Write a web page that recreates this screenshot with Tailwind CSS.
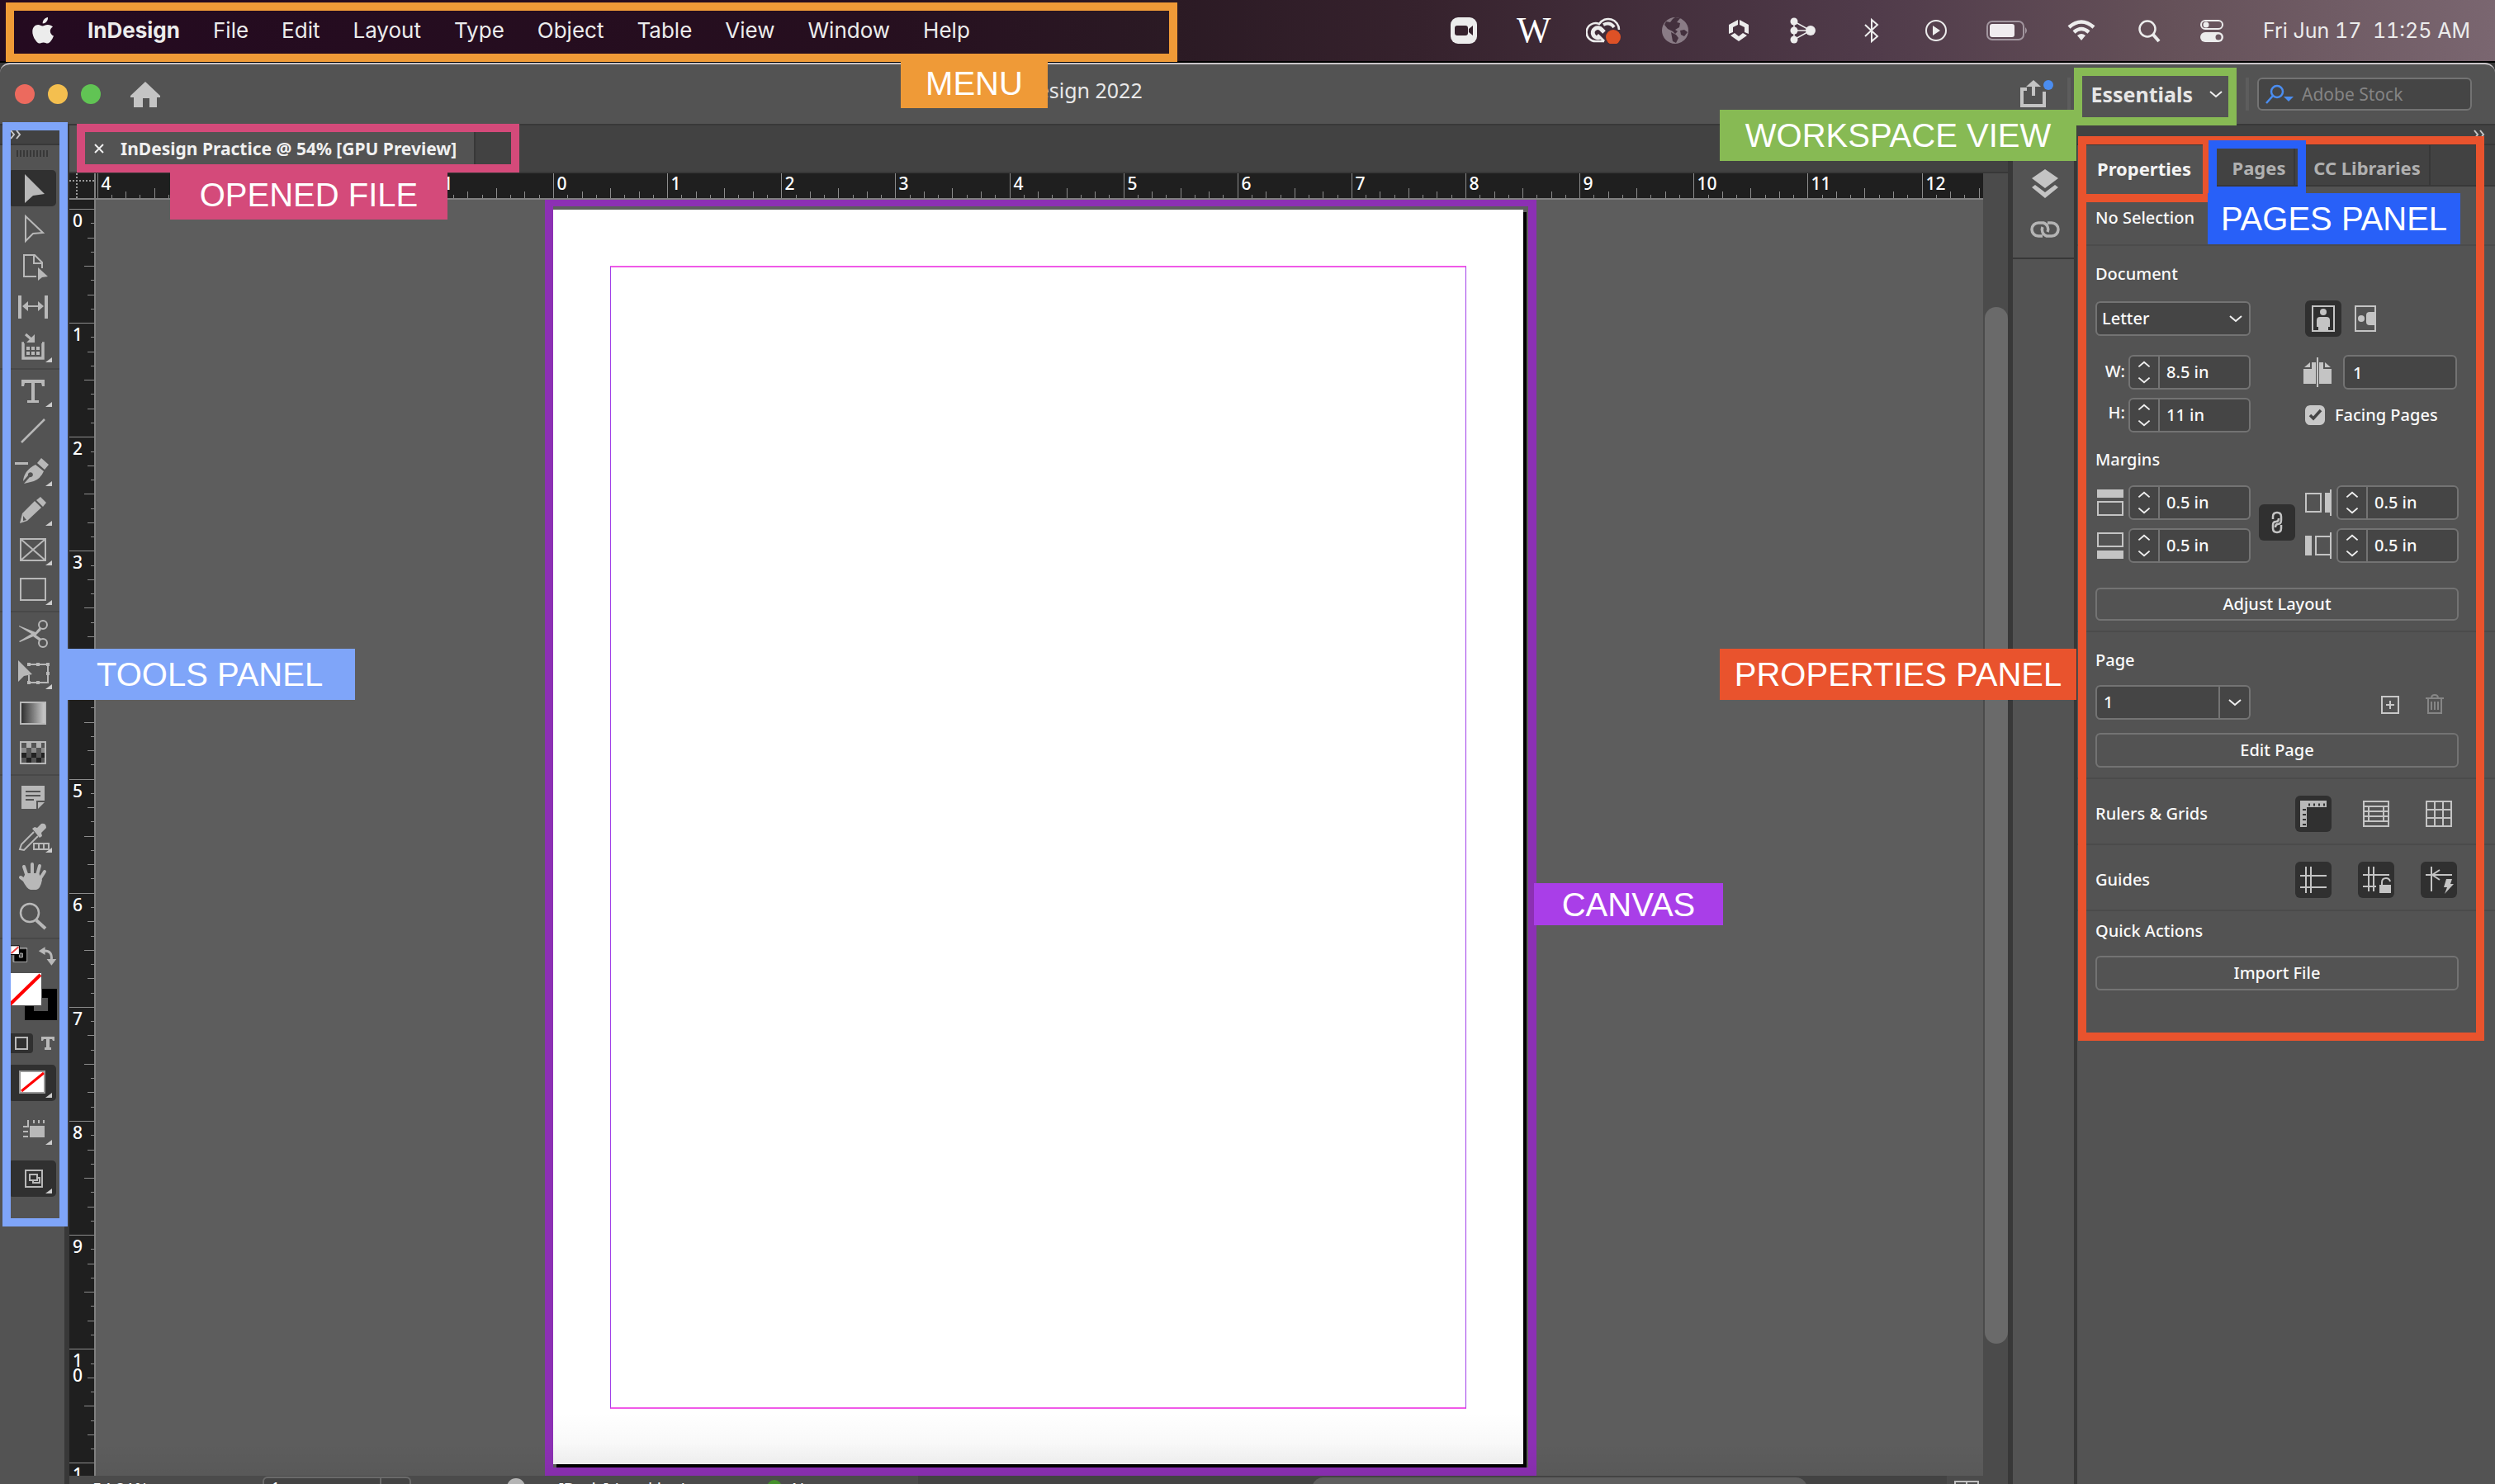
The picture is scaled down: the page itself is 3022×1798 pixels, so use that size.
<!DOCTYPE html>
<html lang="en">
<head>
<meta charset="utf-8">
<title>InDesign workspace overview</title>
<script src="https://cdn.jsdelivr.net/npm/@tailwindcss/browser@4"></script>
</head>
<body class="relative flex h-screen flex-col overflow-hidden bg-[#383838] font-['Noto_Sans',sans-serif] text-[20px] leading-6 text-white">

<svg class="hidden" aria-hidden="true">
  <symbol id="updown" viewBox="0 0 36 38"><path d="M11 12l7-6 7 6M11 26l7 6 7-6" fill="none" stroke="#f0f0f0" stroke-width="2"/></symbol>
  <symbol id="chev" viewBox="0 0 16 10"><path d="M1 2l7 6 7-6" fill="none" stroke="#f0f0f0" stroke-width="2"/></symbol>
  <symbol id="more" viewBox="0 0 14 12"><path d="M1 1l4 5-4 5M8 1l4 5-4 5" fill="none" stroke="#c8c8c8" stroke-width="2"/></symbol>
</svg>

<!-- System menu bar -->
<header class="flex h-[76px] shrink-0 items-center border-b-2 border-black bg-[linear-gradient(90deg,#240a20_0%,#260f1f_35%,#2b1a24_47%,#36222d_57%,#503b4a_75%,#655159_87%,#7a6670_100%)] pr-[30px] pl-[38px] font-['Inter',sans-serif] text-[26px] text-[#ececec]">
  <nav class="flex items-center gap-10" aria-label="Application menu">
    <a href="#" aria-label="Apple" class="block h-8 w-7"><svg class="h-8 w-7" viewBox="0 0 28 32"><path fill="#ececec" d="M20 0c.3 2-.6 4-1.700 5.300C17 6.800 15.200 7.600 13.700 7.500c-.2-2 .6-3.900 1.700-5.100C16.600 1 18.500.1 20 0zM26 11.500c-2 1.200-3.300 3-3.200 5.300.1 2.900 1.800 4.800 4.200 5.800-.7 2.100-2 4.300-3.300 6-1.200 1.600-2.400 2.900-4.200 2.900-1.800 0-2.500-1.100-4.900-1.100s-3.200 1.100-4.900 1.100c-1.800 0-3.100-1.500-4.300-3.200C2.500 24.400 1 20 1.300 16.400c.4-4.700 3.500-7.400 6.800-7.400 2.200 0 3.900 1.400 5.500 1.400 1.500 0 3.500-1.500 6.300-1.400 2.600.1 4.800 1 6.100 2.500z"/></svg></a>
    <a href="#" class="font-bold">InDesign</a>
    <a href="#">File</a><a href="#">Edit</a><a href="#">Layout</a><a href="#">Type</a><a href="#">Object</a><a href="#">Table</a><a href="#">View</a><a href="#">Window</a><a href="#">Help</a>
  </nav>
  <div class="ml-auto flex items-center gap-12">
    <svg class="h-8 w-8" viewBox="0 0 32 32"><rect width="32" height="32" rx="9" fill="#ececec"/><rect x="5" y="10" width="16" height="12" rx="3" fill="#36222d"/><path d="M22 14l5-4v12l-5-4z" fill="#36222d"/></svg>
    <span class="w-9 text-center font-['Liberation_Serif',serif] text-[44px] leading-8 text-white">W</span>
    <svg class="h-8 w-11" viewBox="0 0 44 32"><g fill="none" stroke="#ececec"><path d="M22 29H13a11 11 0 1 1 3-21A13 13 0 0 1 40 15" stroke-width="2.500"/><path d="M22 29L14 21" stroke-width="3"/><path d="M17 24a6 6 0 1 1 2-9l3 3" stroke-width="5"/><path d="M21 9q8-4 13 3" stroke-width="4"/></g><circle cx="33" cy="24" r="9" fill="#dd5126"/></svg>
    <svg class="h-8 w-8" viewBox="0 0 32 32"><circle cx="16" cy="16" r="16" fill="#8a7c86"/><path d="M22 1l-4 5 4 1-1 5-5 3 3 2-3 3-3-3-6-3-4-5 2-4 5 1 3-4 3-2zM22 16l5-1 4 3-4 5-4-2zM11 18l6 3 3 4-3 6-4-2z" fill="#43303d"/></svg>
    <svg class="h-8 w-[26px]" viewBox="0 0 26 32"><path fill="#ececec" d="M12 3L1 9v11l5-2v-6l6-3zM14 3l11 6v11l-5-2v-6l-6-3zM3 22l5-3 5 4 5-4 5 3-10 7z"/></svg>
    <svg class="h-8 w-[34px]" viewBox="0 0 34 32"><g fill="#ececec"><circle cx="6" cy="5" r="4.500"/><circle cx="6" cy="16" r="4.500"/><circle cx="6" cy="27" r="4.500"/><circle cx="26" cy="16" r="6"/></g><path d="M6 5l20 11L6 27zM6 16h20" fill="none" stroke="#ececec" stroke-width="1.500"/></svg>
    <svg class="h-8 w-[35px]" viewBox="0 0 35 32"><path d="M10 9l15 14-7 6V3l7 6-15 14" fill="none" stroke="#ececec" stroke-width="2"/></svg>
    <svg class="h-8 w-[26px]" viewBox="0 0 26 32"><circle cx="13" cy="16" r="12" fill="none" stroke="#ececec" stroke-width="2"/><path d="M9 10l9 6-9 6z" fill="#ececec"/></svg>
    <svg class="h-8 w-[50px]" viewBox="0 0 50 32"><rect x="1" y="5" width="44" height="22" rx="6" fill="none" stroke="#a2969f" stroke-width="2"/><rect x="4" y="8" width="30" height="16" rx="3" fill="#f0ecef"/><path d="M47 12q4 4 0 8z" fill="#a2969f"/></svg>
    <svg class="h-8 w-[34px]" viewBox="0 0 34 32"><g fill="none" stroke="#ececec" stroke-width="4.500"><path d="M2 12q15-13 30 0"/><path d="M8 18q9-8 18 0"/></g><path d="M12 22q5-4 10 0l-5 6z" fill="#ececec"/></svg>
    <svg class="h-8 w-[31px]" viewBox="0 0 31 32"><circle cx="15" cy="14" r="9.500" fill="none" stroke="#ececec" stroke-width="2.500"/><path d="M22 21l7 8" stroke="#ececec" stroke-width="4"/></svg>
    <svg class="h-8 w-7" viewBox="0 0 28 32"><rect x="1" y="4" width="26" height="10" rx="5" fill="none" stroke="#ececec" stroke-width="2"/><circle cx="7" cy="9" r="3.500" fill="#ececec"/><rect y="18" width="28" height="12" rx="6" fill="#ececec"/><circle cx="22" cy="24" r="3.500" fill="#6b5760"/></svg>
    <time class="text-[25px] whitespace-pre tabular-nums">Fri Jun 17  11:25 AM</time>
  </div>
</header>

<!-- Window title bar -->
<div class="flex h-[76px] shrink-0 items-center rounded-t-xl border-t-2 border-b-2 border-t-[#c9c4c8] border-b-[#383838] bg-[#535353] pr-7 pl-[18px]">
  <div class="flex gap-4">
    <button aria-label="Close" class="size-6 rounded-full bg-[#ec6a5e]"></button>
    <button aria-label="Minimize" class="size-6 rounded-full bg-[#f4bf4f]"></button>
    <button aria-label="Zoom" class="size-6 rounded-full bg-[#61c454]"></button>
  </div>
  <button aria-label="Home" class="ml-9"><svg class="h-8 w-9" viewBox="0 0 36 32"><path fill="#c4c4c4" d="M18 1l18 17v2h-4v12h-9V21h-8v11H4V20H0v-2z"/></svg></button>
  <h1 class="ml-[938px] pb-[10px] text-[25px] text-[#e8e8e8]">Adobe InDesign 2022</h1>
  <div class="ml-auto flex items-center">
    <button aria-label="Share"><svg class="h-9 w-[42px]" viewBox="0 0 42 36"><path d="M9 12H3v20h27V15" fill="none" stroke="#c4c4c4" stroke-width="4"/><path d="M17 20V4" stroke="#c4c4c4" stroke-width="4"/><path d="M8 9l9-8 9 8z" fill="#c4c4c4"/><circle cx="35" cy="7" r="6" fill="#4b8df0"/></svg></button>
    <span class="ml-4 h-10 w-1 bg-[#5d5d5d]"></span>
    <button class="ml-6 flex items-center gap-5 text-[25px] font-bold text-[#e6e6e6]">Essentials <svg class="h-[10px] w-4"><use href="#chev"/></svg></button>
    <span class="ml-7 h-10 w-1 bg-[#5d5d5d]"></span>
    <label class="ml-[10px] flex h-10 w-[260px] items-center gap-2 rounded-md border-2 border-[#737373] bg-[#454545] pl-2">
      <svg class="h-6 w-9 shrink-0" viewBox="0 0 36 24"><circle cx="14" cy="9" r="7" fill="none" stroke="#4b8df0" stroke-width="2.500"/><path d="M9 14l-8 9" stroke="#4b8df0" stroke-width="2.500"/><path d="M22 15h12l-6 6z" fill="#4b8df0"/></svg>
      <input aria-label="Search Adobe Stock" placeholder="Adobe Stock" class="w-44 bg-transparent text-[21px] placeholder-[#848484]">
    </label>
  </div>
</div>

<main class="flex min-h-0 flex-1">
  <!-- Tools -->
  <aside class="flex w-[78px] shrink-0 flex-col bg-[#535353]" aria-label="Tools">
    <div class="flex h-6 shrink-0 items-center border-b-2 border-[#383838] bg-[#424242] pl-3"><svg class="h-3 w-[14px]"><use href="#more"/></svg></div>
    <div class="flex h-7 shrink-0 items-center pb-2 pl-5"><svg class="h-2 w-[38px]" viewBox="0 0 38 8"><path d="M0 4h38" stroke="#383838" stroke-width="8" stroke-dasharray="2 2"/></svg></div>
    <div id="tools" class="flex flex-col text-[#b8b8b8]">
      <button aria-label="Selection" class="h-12"><svg class="h-12 w-20" viewBox="0 0 80 48"><rect x="10" y="2" width="58" height="44" rx="5" fill="#303030"/><path fill="currentColor" d="M30 7l24 24-14 2-10 9z"/></svg></button>
      <button aria-label="Direct selection" class="h-12"><svg class="h-12 w-20" viewBox="0 0 80 48"><path fill="none" stroke="currentColor" stroke-width="2" d="M31 10l21 20-12 1-9 9z"/></svg></button>
      <button aria-label="Page" class="h-12"><svg class="h-12 w-20" viewBox="0 0 80 48"><path fill="none" stroke="currentColor" stroke-width="2" d="M44 35H29V9h13l9 9v7M41 9v10h10"/><path fill="currentColor" d="M46 24l12 11-7 1-5 4z"/></svg></button>
      <button aria-label="Gap" class="h-12"><svg class="h-12 w-20" viewBox="0 0 80 48"><path fill="currentColor" d="M22 10h4v28h-4zM54 10h4v28h-4zM27 23l7-6v12zM53 23l-7-6v12z"/><path d="M30 23h20" stroke="currentColor" stroke-width="2"/></svg></button>
      <button aria-label="Content collector" class="h-12"><svg class="h-12 w-20" viewBox="0 0 80 48"><path fill="none" stroke="currentColor" stroke-width="3.500" d="M29 20h-1v18h24V20h-1"/><path fill="currentColor" d="M32 24h4v4h-4zM38 24h4v4h-4zM44 24h4v4h-4zM32 30h4v4h-4zM38 30h4v4h-4zM44 30h4v4h-4zM42 9v10H32z"/><path d="M31 9l8 7" stroke="currentColor" stroke-width="3"/><path fill="#ccc" d="M55 43h8v-6z"/></svg></button>
      <hr class="my-[2px] border-t-2 border-[#484848]">
      <button aria-label="Type" class="h-12"><svg class="h-12 w-20" viewBox="0 0 80 48"><path fill="currentColor" d="M26 10h28v8h-3l-1-4h-8v21h5v3H33v-3h5V14h-8l-1 4h-3z"/><path fill="#ccc" d="M55 43h8v-6z"/></svg></button>
      <button aria-label="Line" class="h-12"><svg class="h-12 w-20" viewBox="0 0 80 48"><path d="M26 38l28-28" stroke="currentColor" stroke-width="2.500"/></svg></button>
      <button aria-label="Pen" class="h-12"><svg class="h-12 w-20" viewBox="0 0 80 48"><path fill="currentColor" d="M18 14h16v3H18zM50 9l9 8-5 6-9-8zM43 17l10 8q-4 9-12 12l-12 3 7-8a3 3 0 1 0-2-2l-6 7q1-13 15-20z"/><path fill="#ccc" d="M55 43h8v-6z"/></svg></button>
      <button aria-label="Pencil" class="h-12"><svg class="h-12 w-20" viewBox="0 0 80 48"><path fill="currentColor" d="M49 8l7 7-4 5-8-8zM42 13l8 8-17 16-9 3 3-12z"/><path fill="#535353" d="M28 31l4 5-4 1z"/><path fill="#ccc" d="M55 43h8v-6z"/></svg></button>
      <button aria-label="Rectangle frame" class="h-12"><svg class="h-12 w-20" viewBox="0 0 80 48"><path fill="none" stroke="currentColor" stroke-width="2" d="M25 11h30v26H25zL55 37M55 11L25 37"/><path fill="#ccc" d="M55 43h8v-6z"/></svg></button>
      <button aria-label="Rectangle" class="h-12"><svg class="h-12 w-20" viewBox="0 0 80 48"><path fill="none" stroke="currentColor" stroke-width="2" d="M25 11h30v26H25z"/><path fill="#ccc" d="M55 43h8v-6z"/></svg></button>
      <hr class="my-[2px] border-t-2 border-[#484848]">
      <button aria-label="Scissors" class="h-12"><svg class="h-12 w-20" viewBox="0 0 80 48"><g fill="none" stroke="currentColor" stroke-width="2"><circle cx="52" cy="13" r="5"/><circle cx="52" cy="35" r="5"/></g><path fill="currentColor" d="M23 14l20 8 5-6 2 3-7 7-19 8-1-1 15-9-15-9zM43 25l7 5-3 2-7-5z"/></svg></button>
      <button aria-label="Free transform" class="h-12"><svg class="h-12 w-20" viewBox="0 0 80 48"><path fill="currentColor" d="M22 8l17 17-10 2-7 7zM33 11h4v4h-4zM44 11h4v4h-4zM56 11h4v4h-4zM56 22h4v4h-4zM33 33h4v4h-4zM44 33h4v4h-4z"/><path fill="none" stroke="currentColor" stroke-width="2" d="M36 13h22v22H35v-9"/><path fill="#ccc" d="M55 43h8v-6z"/></svg></button>
      <button aria-label="Gradient swatch" class="h-12"><svg class="h-12 w-20" viewBox="0 0 80 48"><defs><linearGradient id="gr"><stop offset="0" stop-color="#2a2a2a"/><stop offset="1" stop-color="#d0d0d0"/></linearGradient></defs><path fill="url(#gr)" stroke="currentColor" stroke-width="2" d="M25 11h30v26H25z"/></svg></button>
      <button aria-label="Gradient feather" class="h-12"><svg class="h-12 w-20" viewBox="0 0 80 48"><path fill="#555" stroke="currentColor" stroke-width="2" d="M25 11h30v26H25z"/><path fill="#b0b0b0" d="M32 12h6v6h-6zM44 12h6v6h-6z"/><path fill="#8a8a8a" d="M26 18h6v6h-6zM38 18h6v6h-6zM50 18h4v6h-4z"/><path fill="#222" d="M26 24h6v6h-6zM38 24h6v6h-6zM50 24h4v6h-4zM32 30h6v6h-6zM44 30h6v6h-6z"/></svg></button>
      <hr class="my-[2px] border-t-2 border-[#484848]">
      <button aria-label="Note" class="h-12"><svg class="h-12 w-20" viewBox="0 0 80 48"><path fill="currentColor" d="M26 10h28v18H44v10H26zM46 38v-8h8z"/><path d="M31 17h18M31 22h18M31 27h10" stroke="#535353" stroke-width="2"/></svg></button>
      <button aria-label="Eyedropper" class="h-12"><svg class="h-12 w-20" viewBox="0 0 80 48"><path fill="none" stroke="currentColor" stroke-width="2" d="M41 18L26 33l-2 6 5 1 17-17"/><path fill="currentColor" d="M39 14l3-2 3 1 5-5q6-1 6 5l-6 6 1 4-3 2z"/><path fill="none" stroke="currentColor" stroke-width="2" d="M41 32h18v7H41zM47 32v7M53 32v7"/><path fill="#ccc" d="M55 43h8v-6z"/></svg></button>
      <button aria-label="Hand" class="h-12"><svg class="h-12 w-20" viewBox="0 0 80 48"><path d="M39 22V9M33 24l-4-12M45 22l3-11M49 26l5-8M32 30l-7-5" stroke="currentColor" stroke-width="4" stroke-linecap="round"/><path fill="currentColor" d="M31 20l16 0 4 8q-2 11-7 12h-7q-4 0-10-12z"/></svg></button>
      <button aria-label="Zoom" class="h-12"><svg class="h-12 w-20" viewBox="0 0 80 48"><circle cx="36" cy="20" r="11" fill="none" stroke="currentColor" stroke-width="2.500"/><path d="M44 29l11 10" stroke="currentColor" stroke-width="4"/></svg></button>
      <hr class="my-[2px] border-t-2 border-[#484848]">
      <div class="flex h-[34px]"><svg class="h-[34px] w-20" viewBox="0 0 80 34"><path fill="none" stroke="#b8b8b8" stroke-width="1" d="M19.500 8.500h14v17h-17v-8"/><path fill="#000" d="M18 10h15v15H18z"/><path fill="#535353" stroke="#b8b8b8" d="M24 15h4v5h-4z"/><path fill="#fff" stroke="#000" d="M13 5.500h11v11H13z"/><path d="M14 15l9-8" stroke="#e44" stroke-width="2"/><path fill="none" stroke="currentColor" stroke-width="3" d="M54 12q11-1 10 11"/><path fill="currentColor" d="M56 7v10l-8-5zM58 22h12l-6 8z"/></svg></div>
      <div class="h-[68px]"><svg class="h-[68px] w-20" viewBox="0 0 80 68"><path fill="none" stroke="#000" stroke-width="11" d="M35.500 29.500h28v27h-28z"/><path fill="#fff" stroke="#535353" d="M11 4.500h39.500v40H11z"/><path d="M12 43L49 7" stroke="#f00" stroke-width="4"/></svg></div>
      <div class="h-[44px]"><svg class="h-[44px] w-20" viewBox="0 0 80 44"><rect x="10" y="10" width="30" height="24" rx="4" fill="#303030"/><path fill="none" stroke="currentColor" stroke-width="2" d="M19 15h14v14H19z"/><path fill="currentColor" d="M50 14h16v5h-2l-1-2h-3v10h2v3h-8v-3h2V17h-3l-1 2h-2z"/></svg></div>
      <button aria-label="Apply none" class="h-[52px]"><svg class="h-[52px] w-20" viewBox="0 0 80 52"><rect x="10" y="4" width="58" height="44" rx="5" fill="#303030"/><path fill="#fff" stroke="#999" stroke-width="2" d="M24 12h30v26H24z"/><path d="M26 36l27-22" stroke="#f00" stroke-width="3"/><path fill="#ccc" d="M55 44h8v-6z"/></svg></button>
      <button aria-label="Normal view" class="h-[64px]"><svg class="h-[64px] w-20" viewBox="0 0 80 64"><path fill="currentColor" d="M36 26h18v14H36zM40 19h2v4h-2zM46 19h2v4h-2zM52 19h2v4h-2z"/><path d="M34 19v8h-6M28 33h6M28 39h6" fill="none" stroke="currentColor" stroke-width="2"/><path fill="#ccc" d="M55 49h8v-6z"/></svg></button>
      <button aria-label="Screen mode" class="h-[52px]"><svg class="h-[52px] w-20" viewBox="0 0 80 52"><rect x="10" y="4" width="58" height="44" rx="5" fill="#303030"/><path fill="none" stroke="currentColor" stroke-width="2" d="M31 16h20v20H31zM36 21h9v7h-9zM45 25h3v6h-8v-3"/><path fill="#ccc" d="M55 44h8v-6z"/></svg></button>
    </div>
  </aside>

  <!-- Document -->
  <section class="ml-[6px] flex min-w-0 flex-1 flex-col bg-[#535353]">
    <div class="flex h-[58px] shrink-0 border-b-2 border-[#383838] bg-[#424242]">
      <div class="flex w-[492px] items-center gap-5 border-r-2 border-[#383838] bg-[#535353] pl-[30px]">
        <button aria-label="Close document"><svg class="size-3" viewBox="0 0 12 12"><path d="M1 1l10 10M11 1L1 11" stroke="#eee" stroke-width="2"/></svg></button>
        <span class="text-[21px] font-bold text-[#f0f0f0]">InDesign Practice @ 54% [GPU Preview]</span>
      </div>
    </div>
    <div class="flex min-h-0 flex-1">
      <div class="flex min-w-0 flex-1 flex-col">
        <div class="flex h-8 shrink-0 border-b-2 border-[#808080] bg-[#1f1f1f]">
          <svg class="h-[30px] w-8 shrink-0" viewBox="0 0 32 30"><path d="M0 9h30M9 0v30" stroke="#999" stroke-width="2" stroke-dasharray="2 2"/><path d="M31 0v30" stroke="#808080" stroke-width="2"/></svg>
          <svg id="hruler" class="h-[30px] min-w-0 flex-1"></svg>
        </div>
        <div class="flex min-h-0 flex-1">
          <svg id="vruler" class="w-8 shrink-0 border-r-2 border-[#808080] bg-[#1f1f1f]"></svg>
          <!-- Pasteboard: origin at the corner of the two rulers -->
          <div class="relative min-w-0 flex-1 overflow-hidden bg-[#5d5d5d]">
            <div class="absolute top-[-2px] left-[544px] h-[1548px] w-[1201px] border-[10px] border-[#8c30b4]"></div>
            <div class="absolute top-[15px] left-[558px] h-[1521px] w-[1175px] bg-black"></div>
            <div class="absolute top-3 left-[554px] h-[1520px] w-[1175px] bg-[linear-gradient(#fff_96%,#f4f4f4)]">
              <div class="absolute top-[68px] left-[69px] h-[1385px] w-[1037px] border-x border-y-2 border-x-[#a040e8] border-y-[#f05ae8]"></div>
            </div>
            <div class="absolute inset-x-0 bottom-0 h-10 bg-[linear-gradient(transparent,#0000000c)]"></div>
          </div>
        </div>
      </div>
      <div class="flex w-[30px] shrink-0 flex-col bg-[#4b4b4b] pt-[162px] pl-[2px]"><div class="h-[1256px] rounded-full bg-[#6a6a6a]"></div></div>
    </div>
    <!-- Status bar, running on below the window edge -->
    <div class="h-[10px] shrink-0 overflow-hidden bg-[#4b4b4b]">
      <div class="flex h-10 items-start text-[20px]">
        <span class="w-[234px] pt-1 pl-7">54.21%</span>
        <span class="mt-[1px] flex h-9 w-[180px] rounded-md border-2 border-[#6a6a6a] bg-[#434343] pl-2"><span class="w-[134px] border-r-2 border-[#6a6a6a]">1</span></span>
        <span class="mt-[3px] ml-[116px] size-[22px] rounded-full bg-[#b4b4b4]"></span>
        <span class="w-[293px] pt-1 pl-10">[Basic] (working)</span>
        <span class="mt-[5px] size-[18px] shrink-0 rounded-full bg-[#45902c]"></span>
        <span class="w-[165px] pt-1 pl-3">No errors</span>
        <div class="h-10 flex-1 bg-[#434343] pt-[2px] pl-[477px]"><div class="h-7 w-[600px] rounded-full bg-[#5f5f5f]"></div></div>
        <svg class="h-10 w-[74px] shrink-0" viewBox="0 0 74 40"><path d="M10 30V7h28v23M24 7v23" fill="none" stroke="#c0c0c0" stroke-width="2"/></svg>
      </div>
    </div>
  </section>

  <!-- Collapsed panel dock -->
  <aside class="ml-[6px] flex w-[74px] shrink-0 flex-col bg-[#535353]" aria-label="Collapsed panels">
    <div class="h-[43px] shrink-0 bg-[#424242]"></div>
    <div class="flex flex-col items-center gap-[18px] border-b-2 border-[#383838] pt-[7px] pb-4 pl-1">
      <button aria-label="Layers"><svg class="h-[38px] w-[34px]" viewBox="0 0 34 38"><path fill="#c4c4c4" d="M17 3L33 14 17 26 1 14zM1 25l4-3 12 9 12-9 4 3-16 13z"/></svg></button>
      <button aria-label="Links"><svg class="h-[38px] w-[38px]" viewBox="0 0 38 38"><path d="M16 28h-5a8 8 0 0 1 0-16h6a8 8 0 0 1 5 11M22 12h5a8 8 0 0 1 0 16h-6a8 8 0 0 1-5-11" fill="none" stroke="#b4b4b4" stroke-width="3.500"/></svg></button>
    </div>
  </aside>

  <!-- Properties -->
  <aside class="ml-1 w-[506px] shrink-0 bg-[#535353] font-medium text-[#fafafa]" aria-label="Properties">
    <div class="flex h-6 items-center justify-end border-b-2 border-[#383838] bg-[#424242] pr-3"><svg class="h-3 w-[14px]"><use href="#more"/></svg></div>
    <div class="flex h-[50px] bg-[#424242] text-[22px] font-bold text-[#b0b0b0]" role="tablist">
      <button role="tab" aria-selected="true" class="w-[158px] bg-[#535353] pt-[6px] pl-1 text-[#f4f4f4]">Properties</button>
      <button role="tab" class="w-[106px] border-r-2 border-b-2 border-[#383838] pt-[6px] pl-5">Pages</button>
      <button role="tab" class="w-[164px] border-r-2 border-b-2 border-[#383838] pt-[6px] pl-3">CC Libraries</button>
      <div class="flex-1 border-b-2 border-[#383838]"></div>
    </div>
    <p class="flex h-[72px] items-center border-b-2 border-[#4b4b4b] pt-[6px] pl-[22px]">No Selection</p>

    <section class="border-b-2 border-[#4b4b4b] pr-[44px] pb-3 pl-[22px]">
      <h2 class="pt-[22px]">Document</h2>
      <div class="mt-5 flex items-center">
        <div class="relative h-[42px] w-[188px]">
          <select aria-label="Page size" class="h-[42px] w-[188px] appearance-none rounded-md border-2 border-[#737373] bg-[#454545] pl-[6px]"><option>Letter</option></select>
          <svg class="pointer-events-none absolute top-4 right-[10px] h-[10px] w-4"><use href="#chev"/></svg>
        </div>
        <button aria-label="Portrait" class="ml-[66px] flex h-11 w-11 items-center justify-center rounded-md bg-[#303030]"><svg class="h-8 w-7" viewBox="0 0 28 32"><path d="M1 1h26v30H1z" fill="none" stroke="#c4c4c4" stroke-width="2"/><circle cx="14" cy="8" r="4" fill="#c4c4c4"/><path d="M6 18q0-4 4-4h8q4 0 4 4v8h-2v5H8v-5H6z" fill="#c4c4c4"/></svg></button>
        <button aria-label="Landscape" class="ml-4"><svg class="h-8 w-[26px]" viewBox="0 0 26 32"><path d="M1 1h24v30H1z" fill="none" stroke="#c4c4c4" stroke-width="2"/><circle cx="8" cy="16" r="4" fill="#c4c4c4"/><path d="M26 8h-8q-4 0-4 4v8q0 4 4 4h8z" fill="#c4c4c4"/></svg></button>
      </div>
      <div class="mt-[22px] flex items-center">
        <label for="w" class="w-10 pr-1 pb-[2px] text-right">W:</label>
        <div class="flex h-[42px] w-[148px] rounded-md border-2 border-[#737373] bg-[#454545]"><button aria-label="Step width" class="w-9 shrink-0 border-r-2 border-[#737373]"><svg class="h-[38px] w-[34px]"><use href="#updown"/></svg></button><input id="w" value="8.5 in" class="w-24 bg-transparent pl-2"></div>
        <svg class="ml-16 h-9 w-[34px]" viewBox="0 0 34 36"><path fill="#c4c4c4" d="M0 14h10V6h5v26H0zM1 12l7-6v6zM19 6h5v8h10v18H19zM26 6l7 6h-7z"/><path d="M17 0v36" stroke="#c4c4c4" stroke-width="2"/></svg>
        <input aria-label="Number of pages" value="1" class="ml-[14px] h-[42px] w-[138px] rounded-md border-2 border-[#737373] bg-[#454545] pl-[10px]">
      </div>
      <div class="mt-[10px] flex items-center">
        <label for="h" class="w-10 pr-1 pb-[6px] text-right">H:</label>
        <div class="flex h-[42px] w-[148px] rounded-md border-2 border-[#737373] bg-[#454545]"><button aria-label="Step height" class="w-9 shrink-0 border-r-2 border-[#737373]"><svg class="h-[38px] w-[34px]"><use href="#updown"/></svg></button><input id="h" value="11 in" class="w-24 bg-transparent pl-2"></div>
        <label class="relative ml-[66px] flex items-center gap-3"><input type="checkbox" checked class="size-6 appearance-none rounded-md bg-[#c8c8c8]"><svg class="absolute left-0 size-6" viewBox="0 0 24 24"><path d="M6 12l4 4 9-10" fill="none" stroke="#454545" stroke-width="3.500"/></svg>Facing Pages</label>
      </div>
      <h2 class="mt-[21px]">Margins</h2>
      <div class="mt-[19px] flex items-center">
        <div class="flex flex-col gap-[10px]">
          <div class="flex h-[42px] items-center gap-[6px]">
            <svg class="h-8 w-[34px]" viewBox="0 0 34 32"><path fill="#c4c4c4" d="M2 0h32v10H2z"/><path d="M3 15h30v16H3z" fill="none" stroke="#c4c4c4" stroke-width="2"/></svg>
            <div class="flex h-[42px] w-[148px] rounded-md border-2 border-[#737373] bg-[#454545]"><button aria-label="Step top margin" class="w-9 shrink-0 border-r-2 border-[#737373]"><svg class="h-[38px] w-[34px]"><use href="#updown"/></svg></button><input aria-label="Top margin" value="0.5 in" class="w-24 bg-transparent pl-2"></div>
          </div>
          <div class="flex h-[42px] items-center gap-[6px]">
            <svg class="h-8 w-[34px]" viewBox="0 0 34 32"><path fill="#c4c4c4" d="M2 22h32v10H2z"/><path d="M3 1h30v16H3z" fill="none" stroke="#c4c4c4" stroke-width="2"/></svg>
            <div class="flex h-[42px] w-[148px] rounded-md border-2 border-[#737373] bg-[#454545]"><button aria-label="Step bottom margin" class="w-9 shrink-0 border-r-2 border-[#737373]"><svg class="h-[38px] w-[34px]"><use href="#updown"/></svg></button><input aria-label="Bottom margin" value="0.5 in" class="w-24 bg-transparent pl-2"></div>
          </div>
        </div>
        <button aria-label="Link margins" class="mx-[10px] mb-1 flex size-11 items-center justify-center rounded-md bg-[#303030]"><svg class="h-7 w-4" viewBox="0 0 16 28"><path d="M3 10V7q0-5 5-5t5 5v4q0 5-4 5-3 0-3 4M13 17v4q0 5-5 5t-5-5v-4q0-4 4-4 3 0 3-4" fill="none" stroke="#c4c4c4" stroke-width="2.500"/></svg></button>
        <div class="flex flex-col gap-[10px]">
          <div class="flex h-[42px] items-center gap-[6px]">
            <svg class="h-8 w-[34px]" viewBox="0 0 34 32"><path d="M3 5h18v22H3zM33 0v32" fill="none" stroke="#c4c4c4" stroke-width="2"/><path fill="#c4c4c4" d="M26 4h7v24h-7z"/></svg>
            <div class="flex h-[42px] w-[148px] rounded-md border-2 border-[#737373] bg-[#454545]"><button aria-label="Step outside margin" class="w-9 shrink-0 border-r-2 border-[#737373]"><svg class="h-[38px] w-[34px]"><use href="#updown"/></svg></button><input aria-label="Outside margin" value="0.5 in" class="w-24 bg-transparent pl-2"></div>
          </div>
          <div class="flex h-[42px] items-center gap-[6px]">
            <svg class="h-8 w-[34px]" viewBox="0 0 34 32"><path d="M33 5H15v22h18M33 0v32" fill="none" stroke="#c4c4c4" stroke-width="2"/><path fill="#c4c4c4" d="M2 4h8v24H2z"/></svg>
            <div class="flex h-[42px] w-[148px] rounded-md border-2 border-[#737373] bg-[#454545]"><button aria-label="Step inside margin" class="w-9 shrink-0 border-r-2 border-[#737373]"><svg class="h-[38px] w-[34px]"><use href="#updown"/></svg></button><input aria-label="Inside margin" value="0.5 in" class="w-24 bg-transparent pl-2"></div>
          </div>
        </div>
      </div>
      <button class="mt-[30px] block h-10 w-full rounded-md border-2 border-[#737373]">Adjust Layout</button>
    </section>

    <section class="border-b-2 border-[#4b4b4b] pr-[44px] pb-3 pl-[22px]">
      <h2 class="pt-[22px]">Page</h2>
      <div class="mt-[18px] flex items-center">
        <div class="flex h-[42px] w-[188px] rounded-md border-2 border-[#737373] bg-[#454545]"><input aria-label="Page" value="1" class="w-[149px] border-r-2 border-[#737373] pl-2"><button aria-label="Choose page" class="flex flex-1 items-center justify-center"><svg class="h-[10px] w-4"><use href="#chev"/></svg></button></div>
        <button aria-label="Add page" class="ml-[158px] pt-[6px]"><svg class="h-[22px] w-[22px]" viewBox="0 0 22 22"><path d="M1 1h20v20H1zM11 6v10M6 11h10" fill="none" stroke="#c8c8c8" stroke-width="2"/></svg></button>
        <button aria-label="Delete page" class="ml-8 pt-1"><svg class="h-6 w-[22px]" viewBox="0 0 22 24"><path d="M0 5h22M7 5q0-4 4-4t4 4M3 5v18h16V5M7 9v10M11 9v10M15 9v10" fill="none" stroke="#868686" stroke-width="2"/></svg></button>
      </div>
      <button class="mt-4 block h-[42px] w-full rounded-md border-2 border-[#737373]">Edit Page</button>
    </section>

    <section class="flex h-20 items-center border-b-2 border-[#4b4b4b] pt-[6px] pr-[46px] pl-[22px]">
      <h2 class="flex-1">Rulers &amp; Grids</h2>
      <div class="flex gap-8">
        <button aria-label="Rulers" class="flex size-11 items-center justify-center rounded-md bg-[#303030]"><svg class="size-8" viewBox="0 0 32 32"><path fill="#b8b8b8" d="M0 0h32v8H8v24H0z"/><path d="M10 5h20" stroke="#303030" stroke-width="3" stroke-dasharray="2 4"/><path d="M5 10v20" stroke="#303030" stroke-width="4" stroke-dasharray="2 4"/></svg></button>
        <button aria-label="Baseline grid" class="flex size-11 items-center justify-center"><svg class="size-8" viewBox="0 0 32 32"><path d="M1 1h30v30H1zM1 7h30M1 13h30M1 19h30M1 25h30M7 7v18M25 7v18" fill="none" stroke="#c4c4c4" stroke-width="2"/></svg></button>
        <button aria-label="Document grid" class="flex size-11 items-center justify-center"><svg class="size-8" viewBox="0 0 32 32"><path d="M1 1h30v30H1zM11 1v30M21 1v30M1 11h30M1 21h30" fill="none" stroke="#c4c4c4" stroke-width="2"/></svg></button>
      </div>
    </section>
    <section class="flex h-20 items-center border-b-2 border-[#4b4b4b] pt-[6px] pr-[46px] pl-[22px]">
      <h2 class="flex-1">Guides</h2>
      <div class="flex gap-8">
        <button aria-label="Show guides" class="flex size-11 items-center justify-center rounded-md bg-[#303030]"><svg class="size-8" viewBox="0 0 32 32"><path d="M0 11h32M0 25h32M7 0v32M13 0v32" stroke="#c4c4c4" stroke-width="2"/></svg></button>
        <button aria-label="Lock guides" class="flex size-11 items-center justify-center rounded-md bg-[#303030]"><svg class="size-9 overflow-visible" viewBox="0 0 36 36"><path d="M2 12h32M2 26h16M9 2v30M15 2v30" stroke="#c4c4c4" stroke-width="2"/><path d="M25 24v-3q0-5 5-5 4 0 5 4" fill="none" stroke="#c4c4c4" stroke-width="2"/><path fill="#c4c4c4" d="M22 24h14v10H22z"/></svg></button>
        <button aria-label="Smart guides" class="flex size-11 items-center justify-center rounded-md bg-[#303030]"><svg class="size-9" viewBox="0 0 36 36"><path d="M2 12h32M9 2v30M19 6l-9 6 9 6" fill="none" stroke="#c4c4c4" stroke-width="2"/><path fill="#c4c4c4" d="M27 17h7l-2 6h4L25 35l3-8h-4z"/></svg></button>
      </div>
    </section>
    <section class="pr-[44px] pl-[22px]">
      <h2 class="pt-3">Quick Actions</h2>
      <button class="mt-[18px] block h-[42px] w-full rounded-md border-2 border-[#737373]">Import File</button>
    </section>
  </aside>
</main>

<!-- Callouts over the workspace -->
<div class="pointer-events-none absolute inset-0 font-['Liberation_Sans',sans-serif] text-[40px] leading-none text-white">
  <div class="absolute top-[3px] left-[7px] h-[72px] w-[1419px] border-[10px] border-[#ef9a37]"></div>
  <div class="absolute top-[75px] left-[1091px] flex h-14 w-[178px] items-center justify-center bg-[#ef9a37] pb-1">MENU</div>
  <div class="absolute top-[150px] left-[93px] h-[59px] w-[536px] border-[10px] border-[#d44a7a]"></div>
  <div class="absolute top-[209px] left-[206px] flex h-[57px] w-[336px] items-center justify-center bg-[#d44a7a] pb-1">OPENED FILE</div>
  <div class="absolute top-[148px] left-[3px] h-[1338px] w-[79px] border-[10px] border-[#7fa5f9]"></div>
  <div class="absolute top-[786px] left-[82px] flex h-[62px] w-[348px] items-center bg-[#7fa5f9] pl-[35px]">TOOLS PANEL</div>
  <div class="absolute top-[1070px] left-[1858px] flex h-[51px] w-[229px] items-center justify-center bg-[#a93ee8]">CANVAS</div>
  <div class="absolute top-[165px] right-[13px] h-[1096px] w-[492px] border-[10px] border-[#e9532d]"></div>
  <div class="absolute top-[165px] right-[344px] h-[80px] w-[161px] border-[10px] border-[#e9532d]"></div>
  <div class="absolute top-[786px] right-[507px] flex h-[62px] w-[432px] items-center justify-center bg-[#e9532d]">PROPERTIES PANEL</div>
  <div class="absolute top-[82px] right-[313px] h-[70px] w-[197px] border-[10px] border-[#87ba54]"></div>
  <div class="absolute top-[133px] right-[507px] flex h-[62px] w-[432px] items-center justify-center bg-[#87ba54]">WORKSPACE VIEW</div>
  <div class="absolute top-[170px] right-[229px] h-[66px] w-[118px] border-[10px] border-[#2860f8]"></div>
  <div class="absolute top-[234px] right-[42px] flex h-[62px] w-[306px] items-center justify-center bg-[#2860f8]">PAGES PANEL</div>
</div>

<script>
  // Ruler ticks: one inch is 138.125 px at this zoom, divided into eighths.
  const inch = 138.125;
  const depth = i => i % 8 === 0 ? 32 : i % 4 === 0 ? 12 : i % 2 === 0 ? 8 : 4;
  const covered = [-24, -16]; // figures that lie under the "opened file" callout
  let h = '', v = '';
  for (let i = -32; i <= 101; i++) {
    const x = Math.round(554 + i * inch / 8) + .5;
    h += `<path d="M${x} 30v-${depth(i)}" stroke="#8c8c8c"/>`;
    if (i % 8 === 0 && !covered.includes(i)) h += `<text x="${x + 4}" y="20" font-size="21" font-weight="500" fill="#fff">${Math.abs(i / 8)}</text>`;
  }
  for (let i = 0; i <= 88; i++) {
    const y = Math.round(11 + i * inch / 8) + .5;
    v += `<path d="M30 ${y}h-${depth(i)}" stroke="#8c8c8c"/>`;
    if (i % 8 === 0) [...String(i / 8)].forEach((d, k) => {
      v += `<text x="4" y="${y + 21 + k * 18}" font-size="21" font-weight="500" fill="#fff">${d}</text>`;
    });
  }
  document.getElementById('hruler').innerHTML = h;
  document.getElementById('vruler').innerHTML = v;
</script>
</body>
</html>
